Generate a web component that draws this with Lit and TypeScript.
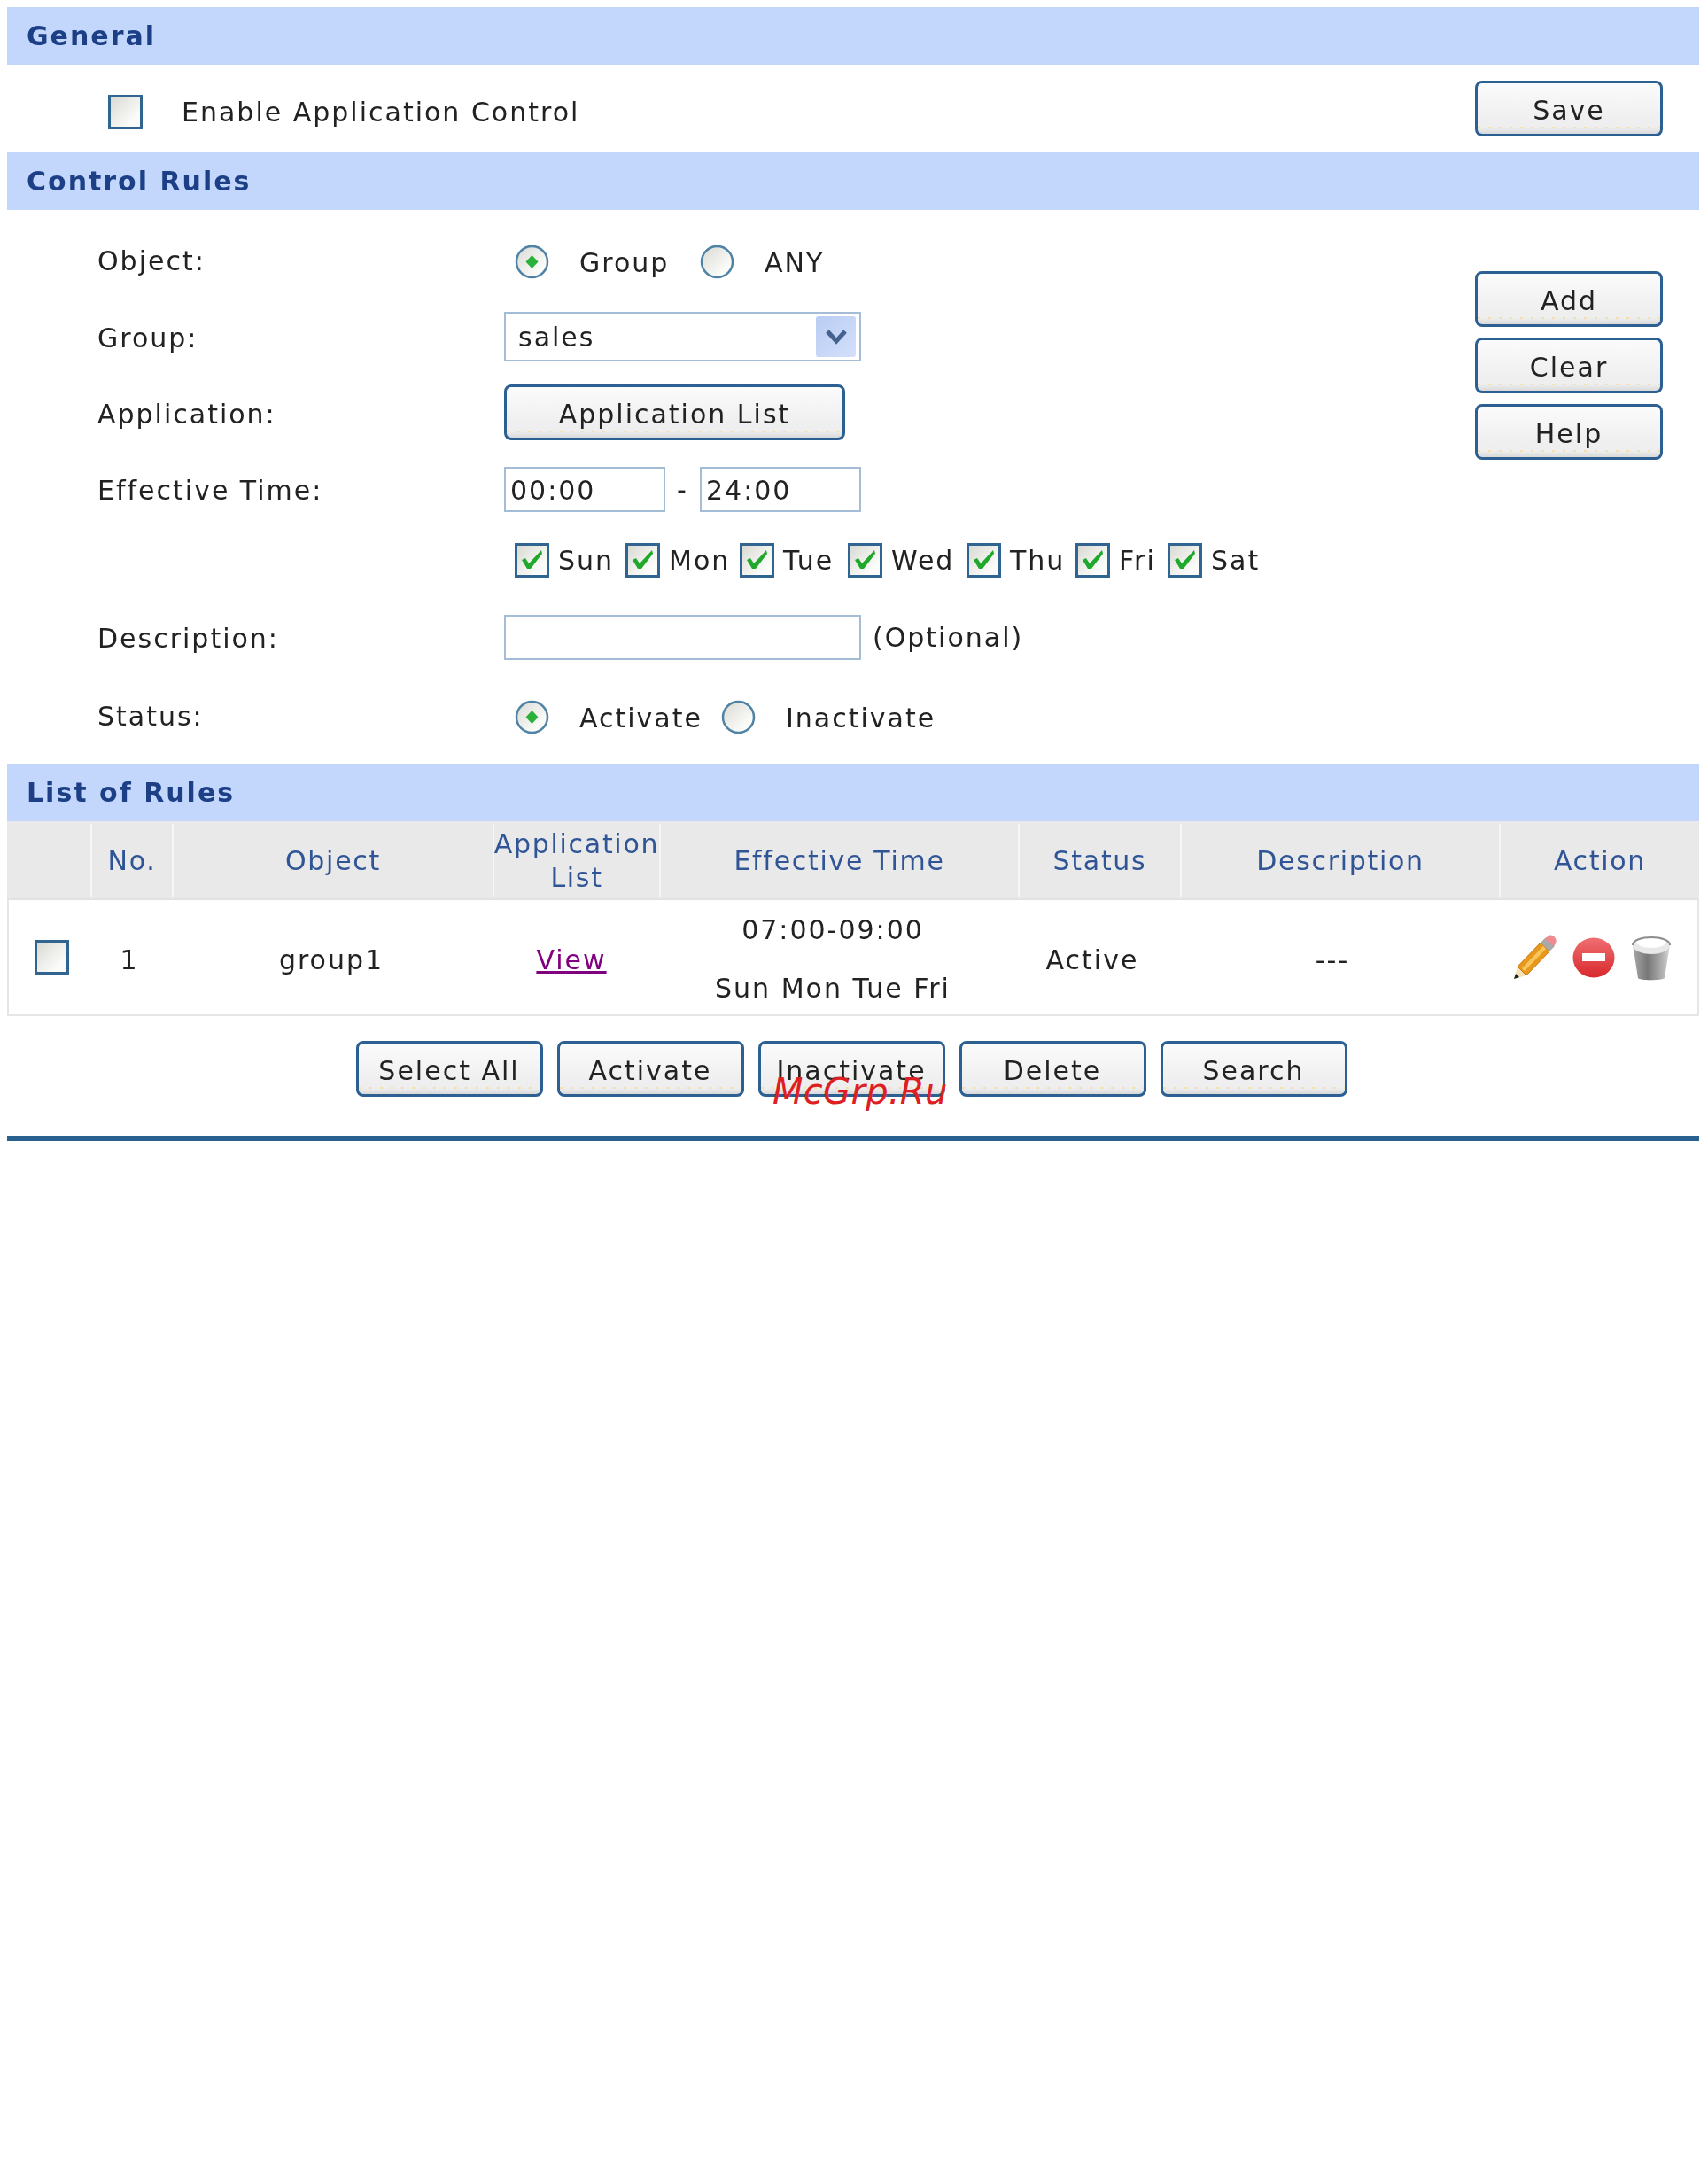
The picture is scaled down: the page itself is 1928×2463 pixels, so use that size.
import { LitElement, html, css, svg } from "lit";
import { customElement } from "lit/decorators.js";

const DAYS = ["Sun", "Mon", "Tue", "Wed", "Thu", "Fri", "Sat"];
const BOTTOM = ["Select All", "Activate", "Inactivate", "Delete", "Search"];
const HEADS = ["", "No.", "Object", "Application List", "Effective Time", "Status", "Description", "Action"];

@customElement("app-root")
export class AppRoot extends LitElement {
  static styles = css`
    :host { display: block; position: relative; width: 1928px; min-height: 2463px; background: #fff;
      font-family: "DejaVu Sans", Verdana, sans-serif; font-size: 30px; letter-spacing: 2px; color: #222; }
    * { box-sizing: border-box; }
    .page { padding: 8px 10px 0 8px; filter: blur(0.6px); }
    .bar { height: 65px; background: #c3d7fd; color: #1c3f86; font-weight: 700; font-size: 30px;
      display: flex; align-items: center; padding-left: 22px; }
    .general { height: 99px; display: flex; align-items: flex-start; justify-content: space-between; padding: 18px 41px 0 114px; }
    .enable { display: flex; align-items: center; gap: 44px; margin-top: 16px; }
    .btn { width: 212px; height: 63px; border: 3px solid #2c5f92; border-radius: 8px; display: flex; align-items: center; justify-content: center;
      padding-top: 3px;
      background:
        repeating-linear-gradient(90deg, #f6dfae 0 3px, transparent 3px 12px) 0 calc(100% - 6px) / 100% 2px no-repeat,
        linear-gradient(#fbfbfb, #efefef 72%, #eeeeee 88%, #d9d9d9);
      color: #222; }
    .wide { width: 385px; }
    .rules { height: 625px; display: flex; justify-content: space-between; padding: 14px 41px 0 102px; }
    .form { display: flex; flex-direction: column; }
    .row { display: grid; grid-template-columns: 459px auto; align-items: center; }
    .row > span { padding-top: 3px; }
    .r1 { height: 86px; padding-top: 3px; } .r2 { height: 85px; } .r3 { height: 87px; } .r4 { height: 86px; }
    .r5 { height: 74px; } .r6 { height: 100px; } .r7 { height: 78px; padding-top: 3px; }
    .row > .lift { padding: 0 0 3px; }
    .opts { display: flex; align-items: center; padding-left: 12px; }
    .opt { display: flex; align-items: center; gap: 34px; }
    .opt span { padding-top: 2px; }
    .w209 { width: 209px; } .w233 { width: 233px; }
    .side { display: flex; flex-direction: column; gap: 12px; margin-top: 55px; }
    .select { width: 403px; height: 56px; border: 2px solid #a5bcd7; display: flex; align-items: center; justify-content: space-between;
      padding: 3px 4px 3px 14px; background: #fff; }
    .select > span:first-child { padding-top: 2px; }
    .arrow { width: 45px; height: 46px; border-radius: 3px; background: linear-gradient(135deg, #b9cdf3, #d4e0fb); display: flex; align-items: center; justify-content: center; }
    .input { width: 182px; height: 51px; border: 2px solid #a5bcd7; background: #fff; display: flex; align-items: center; padding: 2px 0 0 5px; }
    .desc { width: 403px; }
    .times { display: flex; align-items: center; }
    .dash { width: 39px; text-align: center; }
    .descwrap { display: flex; align-items: center; gap: 13px; }
    .days { display: grid; grid-template-columns: 125px 129px 122px 134px 123px 104px auto; padding-left: 12px; }
    .day { display: flex; align-items: center; gap: 10px; }
    .box { display: block; flex: none; }
    .thead { height: 89px; background: #e9e9e9; border-bottom: 2px solid #e2e2e2; padding: 3px 0 2px; display: grid;
      grid-template-columns: 94px 92px 362px 188px 405px 183px 360px 226px; color: #2f5597; letter-spacing: 1.7px; }
    .th { display: flex; align-items: center; justify-content: center; text-align: center; border-left: 2px solid #f6f6f6; line-height: 38px; padding-top: 2px; }
    .th:first-child { border-left: 0; }
    .tbody { height: 131px; border: 2px solid #e6e6e6; border-top: 0; display: grid; align-items: center;
      grid-template-columns: 96px 80px 376px 166px 424px 162px 380px 218px; }
    .td { display: flex; flex-direction: column; align-items: center; justify-content: center; }
    .txt { padding-top: 5px; }
    .time { gap: 30px; line-height: 36px; }
    .view { color: #800080; text-decoration: underline; }
    .actions { flex-direction: row; gap: 18px; justify-content: flex-start; padding-left: 14px; }
    .footer { height: 135px; display: flex; justify-content: center; gap: 16px; padding: 28px 4px 0 0; }
    .footer .btn { width: 211px; }
    .rule { height: 6px; background: #28608f; }
    .mark { position: absolute; left: 872px; top: 1208px; font: italic 40px "DejaVu Sans", Verdana, sans-serif; letter-spacing: 0.3px; color: #dd1f24; line-height: 48px; }
  `;

  private check(checked: boolean) {
    return html`<svg class="box" width="39" height="39" viewBox="0 0 39 39">
      <defs><linearGradient id="cb" x1="0" y1="0" x2="1" y2="1"><stop offset="0" stop-color="#d8d8d2"/><stop offset="0.75" stop-color="#fbfbf9"/></linearGradient></defs>
      <rect x="1.5" y="1.5" width="36" height="36" fill="url(#cb)" stroke="#2f6590" stroke-width="3"/>
      ${checked ? svg`<path d="M8 19l4-2 4 6L30 8l1 4-13 17h-4z" fill="#1fa82c"/>` : ""}
    </svg>`;
  }

  private radio(on: boolean) {
    return html`<svg class="box" width="39" height="39" viewBox="0 0 39 39">
      <defs><linearGradient id="rb" x1="0" y1="0" x2="1" y2="1"><stop offset="0" stop-color="#d9d9d4"/><stop offset="0.8" stop-color="#fdfdfb"/></linearGradient></defs>
      <circle cx="19.5" cy="19.5" r="17.5" fill="url(#rb)" stroke="#4f83a6" stroke-width="2.5"/>
      ${on ? svg`<path d="M19.5 12l7 7.5-7 7.5-7-7.5z" fill="#2bb03a"/>` : ""}
    </svg>`;
  }

  private pencil() {
    return html`<svg class="box" width="49" height="51" viewBox="0 0 49 51">
      <path d="M1 50l4-14 10 10z" fill="#f6e3b5"/>
      <path d="M1 50l2-6 4 4z" fill="#222"/>
      <path d="M5 36L31 9l10 10-26 27z" fill="#e8991c" stroke="#c87a10" stroke-width="1"/>
      <path d="M10 38L34 13l3 3-24 25z" fill="#f8c65a"/>
      <path d="M31 9l6-6 10 10-6 6z" fill="#a9a9a9"/>
      <path d="M36 5l4-4c3-1 6 0 7 2 2 2 2 5 1 7l-2 3z" fill="#ef8b90"/>
    </svg>`;
  }

  private minus() {
    return html`<svg class="box" width="48" height="46" viewBox="0 0 48 46">
      <defs><linearGradient id="mn" x1="0" y1="0" x2="0" y2="1"><stop offset="0" stop-color="#ef6f72"/><stop offset="1" stop-color="#d8282c"/></linearGradient></defs>
      <ellipse cx="24" cy="23" rx="23.5" ry="22.5" fill="url(#mn)"/>
      <rect x="11" y="18" width="26" height="9" fill="#fff"/>
    </svg>`;
  }

  private trash() {
    return html`<svg class="box" width="46" height="54" viewBox="0 0 46 54">
      <defs><linearGradient id="tr" x1="0" y1="0" x2="1" y2="0"><stop offset="0" stop-color="#a8a8a8"/><stop offset="0.4" stop-color="#777"/><stop offset="0.75" stop-color="#aaa"/><stop offset="1" stop-color="#d5d5d5"/></linearGradient></defs>
      <path d="M2 12l6 38c1 3 28 3 30 0l6-38z" fill="url(#tr)"/>
      <ellipse cx="23" cy="13" rx="21" ry="10" fill="#e8e8e8"/>
      <ellipse cx="23" cy="9" rx="17" ry="7" fill="#fff"/>
      <path d="M2 13C2 1 44 1 44 13" fill="none" stroke="#8d8d8d" stroke-width="2"/>
    </svg>`;
  }

  render() {
    return html`
      <div class="page">
        <div class="bar">General</div>
        <div class="general">
          <div class="enable">${this.check(false)}<span>Enable Application Control</span></div>
          <div class="btn">Save</div>
        </div>
        <div class="bar">Control Rules</div>
        <div class="rules">
          <div class="form">
            <div class="row r1"><span class="lift">Object:</span>
              <div class="opts"><div class="opt w209">${this.radio(true)}<span>Group</span></div><div class="opt">${this.radio(false)}<span>ANY</span></div></div></div>
            <div class="row r2"><span>Group:</span>
              <div class="select"><span>sales</span><span class="arrow"><svg width="24" height="18" viewBox="0 0 24 18"><path d="M2 3l10 11L22 3" fill="none" stroke="#44618f" stroke-width="5"/></svg></span></div></div>
            <div class="row r3"><span>Application:</span><div class="btn wide">Application List</div></div>
            <div class="row r4"><span>Effective Time:</span>
              <div class="times"><div class="input">00:00</div><span class="dash">-</span><div class="input">24:00</div></div></div>
            <div class="row r5"><span></span>
              <div class="days">${DAYS.map((d) => html`<div class="day">${this.check(true)}<span>${d}</span></div>`)}</div></div>
            <div class="row r6"><span>Description:</span>
              <div class="descwrap"><div class="input desc"></div><span>(Optional)</span></div></div>
            <div class="row r7"><span class="lift">Status:</span>
              <div class="opts"><div class="opt w233">${this.radio(true)}<span>Activate</span></div><div class="opt">${this.radio(false)}<span>Inactivate</span></div></div></div>
          </div>
          <div class="side">
            <div class="btn">Add</div><div class="btn">Clear</div><div class="btn">Help</div>
          </div>
        </div>
        <div class="bar">List of Rules</div>
        <div class="thead">${HEADS.map((h) => html`<div class="th">${h}</div>`)}</div>
        <div class="tbody">
          <div class="td">${this.check(false)}</div>
          <div class="td txt">1</div>
          <div class="td txt">group1</div>
          <div class="td txt"><span class="view">View</span></div>
          <div class="td txt time"><span>07:00-09:00</span><span>Sun Mon Tue Fri</span></div>
          <div class="td txt">Active</div>
          <div class="td txt">---</div>
          <div class="td actions">${this.pencil()}${this.minus()}${this.trash()}</div>
        </div>
        <div class="footer">${BOTTOM.map((b) => html`<div class="btn">${b}</div>`)}</div>
        <div class="rule"></div>
      </div>
      <div class="mark">McGrp.Ru</div>
    `;
  }
}
